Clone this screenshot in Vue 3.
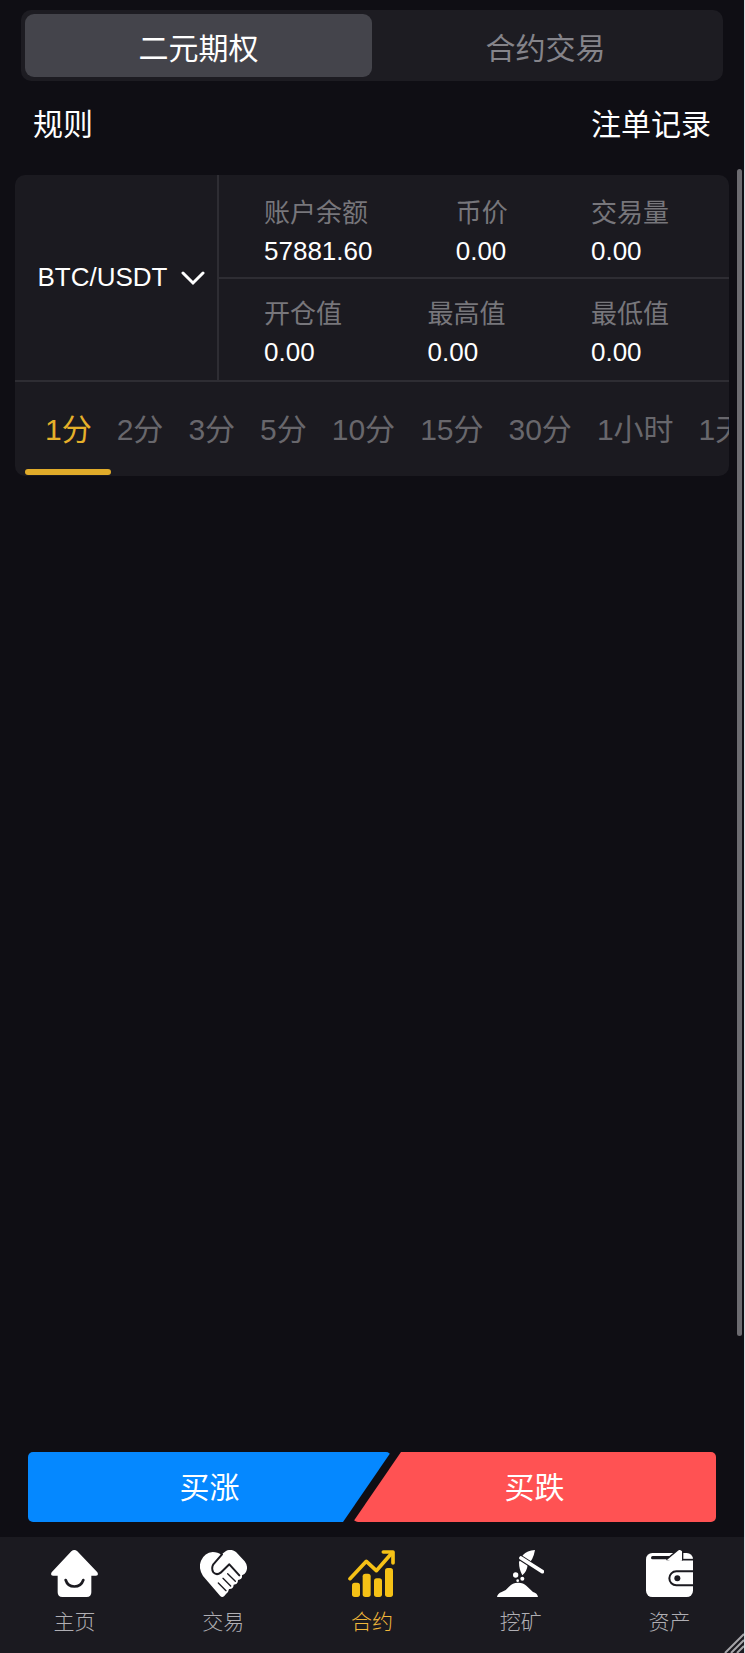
<script setup>
import { ref } from 'vue'

const modes = ['二元期权', '合约交易']
const mode = ref(0)

const statRows = [
  [
    { label: '账户余额', value: '57881.60' },
    { label: '币价', value: '0.00' },
    { label: '交易量', value: '0.00' },
  ],
  [
    { label: '开仓值', value: '0.00' },
    { label: '最高值', value: '0.00' },
    { label: '最低值', value: '0.00' },
  ],
]

const periods = ['1分', '2分', '3分', '5分', '10分', '15分', '30分', '1小时', '1天']
const period = ref(0)
</script>

<template>
  <div class="page">
    <div class="modes">
      <button
        v-for="(name, i) in modes"
        :key="name"
        type="button"
        class="mode"
        :class="{ on: mode === i }"
        @click="mode = i"
      >{{ name }}</button>
    </div>

    <div class="links">
      <a href="#rules">规则</a>
      <a href="#orders">注单记录</a>
    </div>

    <section class="card">
      <div class="market">
        <button type="button" class="pair">
          <span>BTC/USDT</span>
          <svg class="chevron" viewBox="0 0 24 16" aria-hidden="true">
            <path d="M2 3 L12 13 L22 3" />
          </svg>
        </button>
        <div class="stats">
          <dl v-for="(row, r) in statRows" :key="r" class="stat-row">
            <div v-for="s in row" :key="s.label">
              <dt>{{ s.label }}</dt>
              <dd>{{ s.value }}</dd>
            </div>
          </dl>
        </div>
      </div>
      <div class="periods">
        <button
          v-for="(p, i) in periods"
          :key="p"
          type="button"
          class="period"
          :class="{ on: period === i }"
          @click="period = i"
        >{{ p }}</button>
      </div>
    </section>

    <main class="chart"></main>

    <div class="orders">
      <button type="button" class="order up">买涨</button>
      <button type="button" class="order down">买跌</button>
    </div>

    <nav class="nav">
      <a href="#home">
        <svg viewBox="0 0 141 141" aria-hidden="true">
          <path class="fill" d="M61 4Q70-4 79 4L139 67Q144 77 135 77H121V127Q121 141 107 141H34Q20 141 20 127V77H6Q-3 77 2 67Z" />
          <path class="cut" stroke-width="8" d="M44 90C52 116 88 116 97 90" />
        </svg>
        <span>主页</span>
      </a>
      <a href="#trade">
        <svg viewBox="0 0 141 141" aria-hidden="true">
          <path class="fill" d="M60 137L9 78Q-6 55 3 32Q14 8 38 6Q54 6 63 14L78 3Q94-5 108 6L134 34Q146 50 138 66Q132 76 126 76Q128 88 114 90Q114 104 101 104Q100 118 87 117Q86 126 78 132L73 138Q66 144 60 137Z" />
          <path class="cut" stroke-width="6" d="M66 13L40 43Q33 56 40 67Q50 77 62 68L88 43L118 76" />
          <path class="cut" stroke-width="4" d="M83 71L106 94M69 85L92 108M55 99L78 122" />
        </svg>
        <span>交易</span>
      </a>
      <a href="#contract" class="on">
        <svg viewBox="0 0 141 141" aria-hidden="true">
          <path class="line" stroke-width="11" d="M6 86L55 34L85 62L131 10" />
          <path class="line" stroke-width="11" d="M106 6H135V39" />
          <rect class="fill" x="12" y="98" width="24" height="43" rx="8" />
          <rect class="fill" x="44" y="71" width="24" height="70" rx="8" />
          <rect class="fill" x="78" y="85" width="24" height="56" rx="8" />
          <rect class="fill" x="111" y="54" width="24" height="87" rx="8" />
        </svg>
        <span>合约</span>
      </a>
      <a href="#mining">
        <svg viewBox="0 0 141 141" aria-hidden="true">
          <path class="fill" d="M0 141Q2 130 14 126Q28 121 36 110Q47 98 62 98Q78 97 88 107L108 126Q121 129 123 141Z" />
          <path class="fill" d="M114 0Q90 1 78 15L66 36Q66 58 76 76Q90 64 92 45Q109 29 114 0Z" />
          <path class="cut" stroke-width="17" d="M73 25L135 65" />
          <path class="line" stroke-width="11" d="M72 24L136 65" />
          <circle class="fill" cx="56" cy="75" r="8" />
          <circle class="fill" cx="76" cy="86" r="6" />
          <circle class="fill" cx="62" cy="92" r="4" />
        </svg>
        <span>挖矿</span>
      </a>
      <a href="#assets">
        <svg viewBox="0 0 141 141" aria-hidden="true">
          <rect class="fill" x="0" y="9" width="141" height="132" rx="19" />
          <path class="cut" stroke-width="10" d="M20 23H68" />
          <path class="cut flat" stroke-width="5" d="M108 29H141" />
          <path class="cut" stroke-width="10" d="M66 28L98 2Q102-1 107 4V27" />
          <path class="fill" d="M60 32L96 2Q102-3 108 4V32Z" />
          <path class="cut flat" stroke-width="6" d="M141 64H91A21 21 0 0 0 91 106H141" />
          <circle class="dark" cx="94" cy="85" r="9" />
        </svg>
        <span>资产</span>
      </a>
    </nav>

    <div class="scroll-thumb" aria-hidden="true"></div>
    <svg class="grip" viewBox="0 0 20 20" aria-hidden="true">
      <path d="M1 20L20 1M7 20L20 7M13 20L20 13" />
    </svg>
  </div>
</template>

<style>
body {
  background: #0f0e14;
}
</style>

<style scoped>
.page {
  position: relative;
  display: flex;
  flex-direction: column;
  box-sizing: border-box;
  min-height: 100vh;
  padding-top: 10px;
  border-right: 1px solid #dcdce2;
  background: #0f0e14;
  color: #fff;
  font-family: "Liberation Sans", "Noto Sans CJK SC", sans-serif;
  font-size: 30px;
}

button {
  margin: 0;
  padding: 0;
  border: 0;
  background: none;
  color: inherit;
  font: inherit;
  cursor: pointer;
}

a {
  color: inherit;
  text-decoration: none;
}

.modes {
  display: flex;
  margin: 0 21px;
  padding: 4px;
  border-radius: 10px;
  background: #1d1c22;
}

.mode {
  flex: 1;
  height: 63px;
  border-radius: 9px;
  color: #85848a;
}

.mode.on {
  background: #44444b;
  color: #fff;
}

.links {
  display: flex;
  justify-content: space-between;
  align-items: center;
  height: 82px;
  margin-bottom: 12px;
  padding: 0 33px;
}

.card {
  margin: 0 15px;
  border-radius: 10px;
  background: #1b1a20;
  overflow: hidden;
}

.market {
  display: flex;
  border-bottom: 2px solid #2e2d33;
}

.pair {
  display: flex;
  flex: none;
  align-items: center;
  justify-content: center;
  gap: 13px;
  width: 202px;
  padding-left: 10px;
  font-size: 26px;
}

.chevron {
  width: 24px;
  height: 16px;
  fill: none;
  stroke: #fff;
  stroke-width: 3;
  stroke-linecap: round;
}

.stats {
  flex: 1;
  border-left: 2px solid #2e2d33;
}

.stat-row {
  display: flex;
  justify-content: space-between;
  height: 102px;
  box-sizing: border-box;
  margin: 0;
  padding: 19px 60px 0 45px;
  font-size: 26px;
  line-height: 38px;
}

.stat-row + .stat-row {
  height: 103px;
  padding-top: 16px;
  border-top: 2px solid #2e2d33;
}

dt {
  color: #77767b;
}

dd {
  margin: 0;
}

.periods {
  display: flex;
  gap: 25px;
  padding: 0 30px;
  overflow-x: auto;
  scrollbar-width: none;
}

.period {
  position: relative;
  flex: none;
  height: 94px;
  padding-bottom: 4px;
  color: #68676c;
  white-space: nowrap;
}

.period.on {
  color: #e5b02a;
}

.period.on::after {
  content: "";
  position: absolute;
  right: -19px;
  bottom: 1px;
  left: -20px;
  height: 6px;
  border-radius: 3px;
  background: #e0ab2a;
}

.chart {
  flex: 1;
}

.orders {
  display: flex;
  margin: 0 28px 15px;
}

.order {
  flex: 1;
  height: 70px;
  padding-bottom: 4px;
  border-radius: 5px;
}

.up {
  margin-right: -19px;
  background: #0588ff;
  clip-path: polygon(0 0, 100% 0, calc(100% - 48px) 100%, 0 100%);
}

.down {
  margin-left: -19px;
  background: #ff5253;
  clip-path: polygon(48px 0, 100% 0, 100% 100%, 0 100%);
}

.nav {
  display: flex;
  height: 116px;
  background: #1b1a20;
  color: #b0afb4;
  font-size: 21px;
  font-weight: 300;
}

.nav a {
  display: flex;
  flex: 1;
  flex-direction: column;
  align-items: center;
  gap: 10px;
  padding-top: 13px;
  line-height: 30px;
}

.nav svg {
  width: 47px;
  height: 47px;
  color: #fff;
}

.nav .on {
  color: #f0b73a;
}

.nav .on svg {
  color: #f5c116;
}

.fill {
  fill: currentColor;
}

.dark {
  fill: #1b1a20;
}

.line,
.cut {
  fill: none;
  stroke: currentColor;
  stroke-linecap: round;
  stroke-linejoin: round;
}

.cut {
  stroke: #1b1a20;
}

.flat {
  stroke-linecap: butt;
}

.scroll-thumb {
  position: absolute;
  top: 169px;
  right: 2px;
  bottom: 317px;
  width: 5px;
  border-radius: 3px;
  background: #6c6b70;
}

.grip {
  position: absolute;
  right: 0;
  bottom: 0;
  width: 20px;
  height: 20px;
  fill: none;
  stroke: #a5a4a8;
  stroke-width: 2;
}
</style>
